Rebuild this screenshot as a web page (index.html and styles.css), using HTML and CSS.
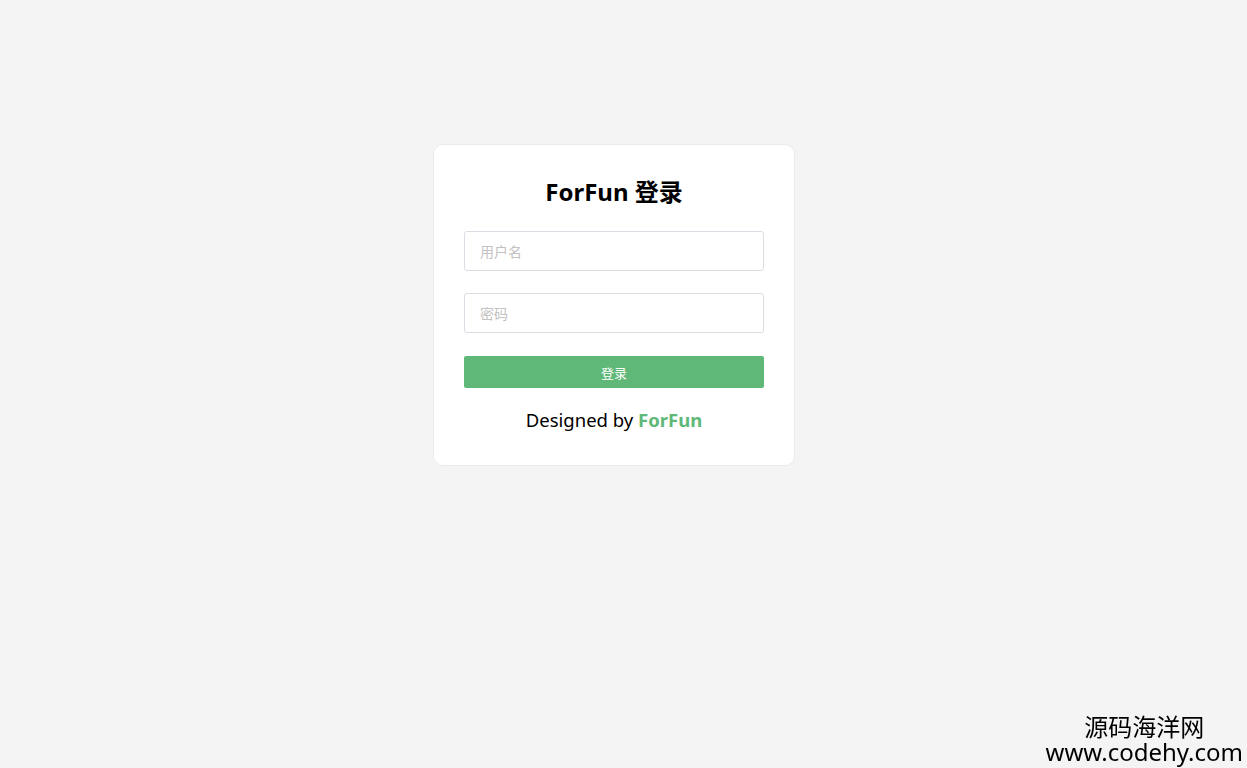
FILE: index.html
```html
<!DOCTYPE html>
<html lang="zh-CN">
<head>
    <meta charset="UTF-8">
    <meta name="viewport" content="width=device-width, initial-scale=1.0">
    <title>ForFun 登录</title>
    <link rel="stylesheet" href="styles.css">
</head>
<body>

    <div class="login-box">
        <h2 class="login-title">ForFun 登录</h2>
        <form class="login-form">
            <input type="text" class="login-input" placeholder="用户名">
            <input type="password" class="login-input" placeholder="密码">
            <button type="button" class="login-btn">登录</button>
        </form>
        <p class="designed">Designed by <b>ForFun</b></p>
    </div>

    <div class="watermark">
        <div>源码海洋网</div>
        <div>www.codehy.com</div>
    </div>

</body>
</html>
```

FILE: styles.css
```css
body {
    margin: 0;
    padding-right: 19px;
    background: #f4f4f4;
    font-family: "Noto Sans", "Noto Sans CJK SC", sans-serif;
}
.login-box {
    width: 300px;
    margin: 144px auto 0;
    padding: 30px;
    background: #fff;
    border: 1px solid #ebebeb;
    border-radius: 10px;
}
.login-title {
    margin: 0 0 24px;
    height: 32px;
    line-height: 34px;
    text-align: center;
    font-size: 24px;
    font-weight: bold;
    color: #000;
}
.login-form {
    display: flex;
    flex-direction: column;
    gap: 22px;
}
.login-input {
    box-sizing: border-box;
    width: 300px;
    height: 40px;
    margin: 0;
    padding: 0 15px;
    border: 1px solid #dcdce4;
    border-radius: 3px;
    font-family: inherit;
    font-size: 14px;
    outline: none;
}
.login-input::placeholder {
    color: #c2c2c2;
}
.login-btn {
    margin-top: 1px;
    height: 32px;
    border: none;
    border-radius: 2px;
    background: #5fb878;
    color: #fff;
    font-family: inherit;
    font-size: 13px;
    cursor: pointer;
}
.designed {
    margin: 18px 0 0;
    height: 29px;
    line-height: 27px;
    text-align: center;
    font-size: 18.5px;
    color: #000;
}
.designed b {
    color: #5fb878;
}
.watermark {
    position: fixed;
    right: 4px;
    bottom: 4px;
    text-align: center;
    font-size: 24px;
    line-height: 25px;
    color: #000;
}
```
